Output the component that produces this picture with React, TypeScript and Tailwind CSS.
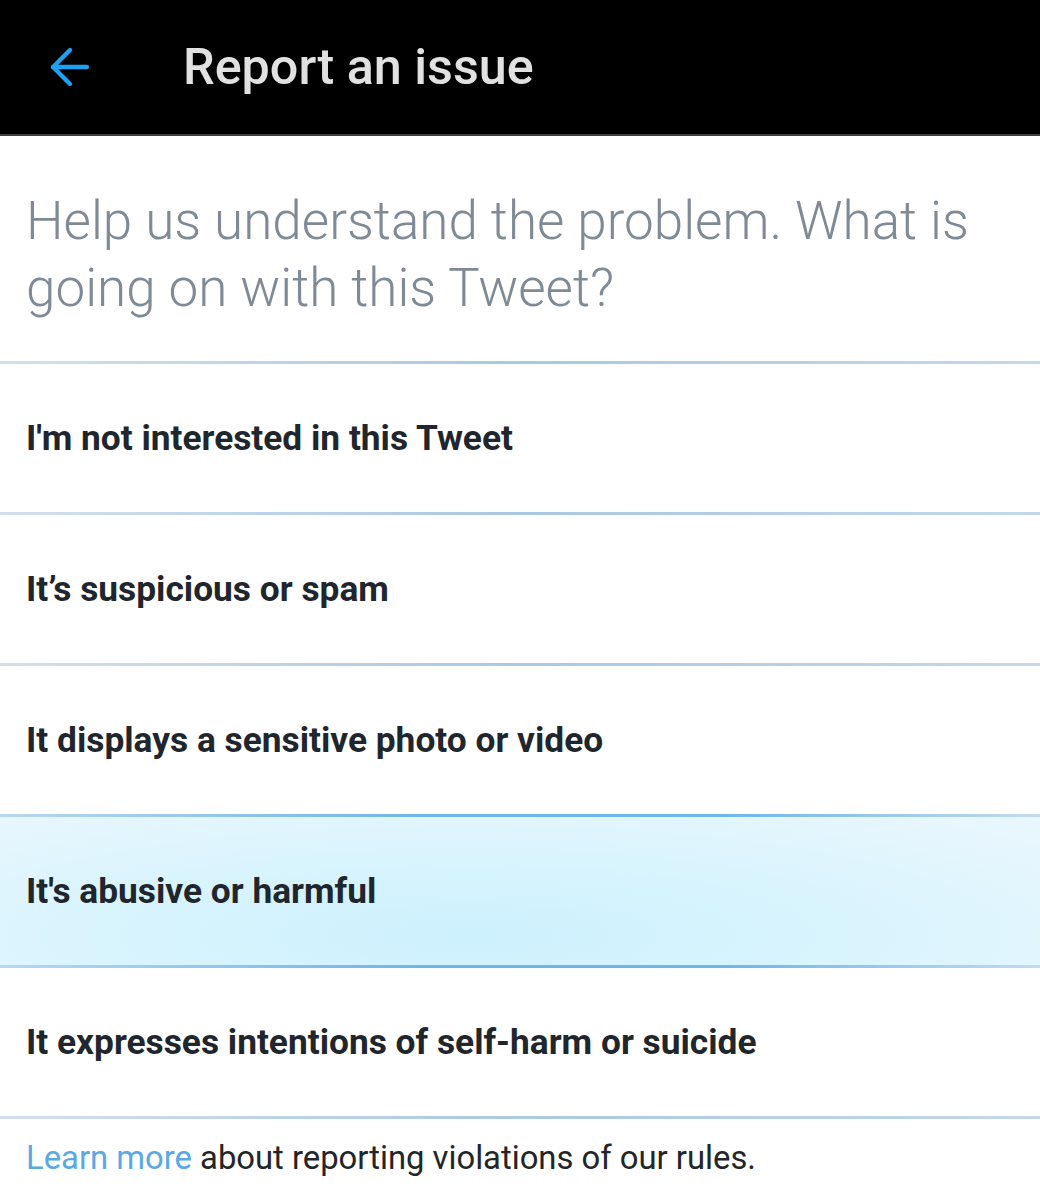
import { ArrowLeft } from 'lucide-react';

const options = [
  { label: "I'm not interested in this Tweet", active: false },
  { label: 'It’s suspicious or spam', active: false },
  { label: 'It displays a sensitive photo or video', active: false },
  { label: "It's abusive or harmful", active: true },
  { label: 'It expresses intentions of self-harm or suicide', active: false },
];

const Divider = ({ strong }: { strong?: boolean }) => (
  <div
    className={`h-[3px] w-full ${
      strong
        ? 'bg-[linear-gradient(90deg,#b9d7ee,#6fb6e8_40%,#6fb6e8_70%,#c3dbee)]'
        : 'bg-[linear-gradient(90deg,#d3e0ea,#a9c8e2_50%,#c4d8e8)]'
    }`}
  />
);

export default function App() {
  return (
    <div className="w-[1040px] h-[1200px] overflow-hidden bg-white font-['Roboto',sans-serif]">
      {/* Header */}
      <div className="h-[136px] bg-black border-b-2 border-[#3c3f42] flex items-center">
        <div className="w-[183px] pl-[41px] flex items-center">
          <ArrowLeft className="w-[58px] h-[58px] text-[#1da1f2]" strokeWidth={1.8} />
        </div>
        <h1 className="text-[50.3px] font-medium text-[#e1e1e1] leading-none">Report an issue</h1>
      </div>

      {/* Question */}
      <div className="px-[26px] pt-[52px] pb-[39px]">
        <p className="text-[53px] font-light leading-[67px] text-[#7e8b96]">
          Help us understand the problem. What is going on with this Tweet?
        </p>
      </div>

      {options.map((o, i) => {
        const prevActive = i > 0 && options[i - 1].active;
        return (
          <div key={i}>
            <Divider strong={o.active || prevActive} />
            <div
              className={`h-[148px] flex items-center px-[26px] ${
                o.active
                  ? 'bg-[radial-gradient(ellipse_at_45%_80%,#cdf1fd,#d8f4fd_45%,#e8f6fd_90%)]'
                  : ''
              }`}
            >
              <span className="text-[35.3px] font-bold text-[#1f262d]">{o.label}</span>
            </div>
          </div>
        );
      })}
      <Divider />

      {/* Footer */}
      <div className="px-[26px] pt-[19px]">
        <p className="text-[32.8px] leading-[40px] text-[#222629]">
          <span className="text-[#5aa8e6]">Learn more</span> about reporting violations of our rules.
        </p>
      </div>
    </div>
  );
}
